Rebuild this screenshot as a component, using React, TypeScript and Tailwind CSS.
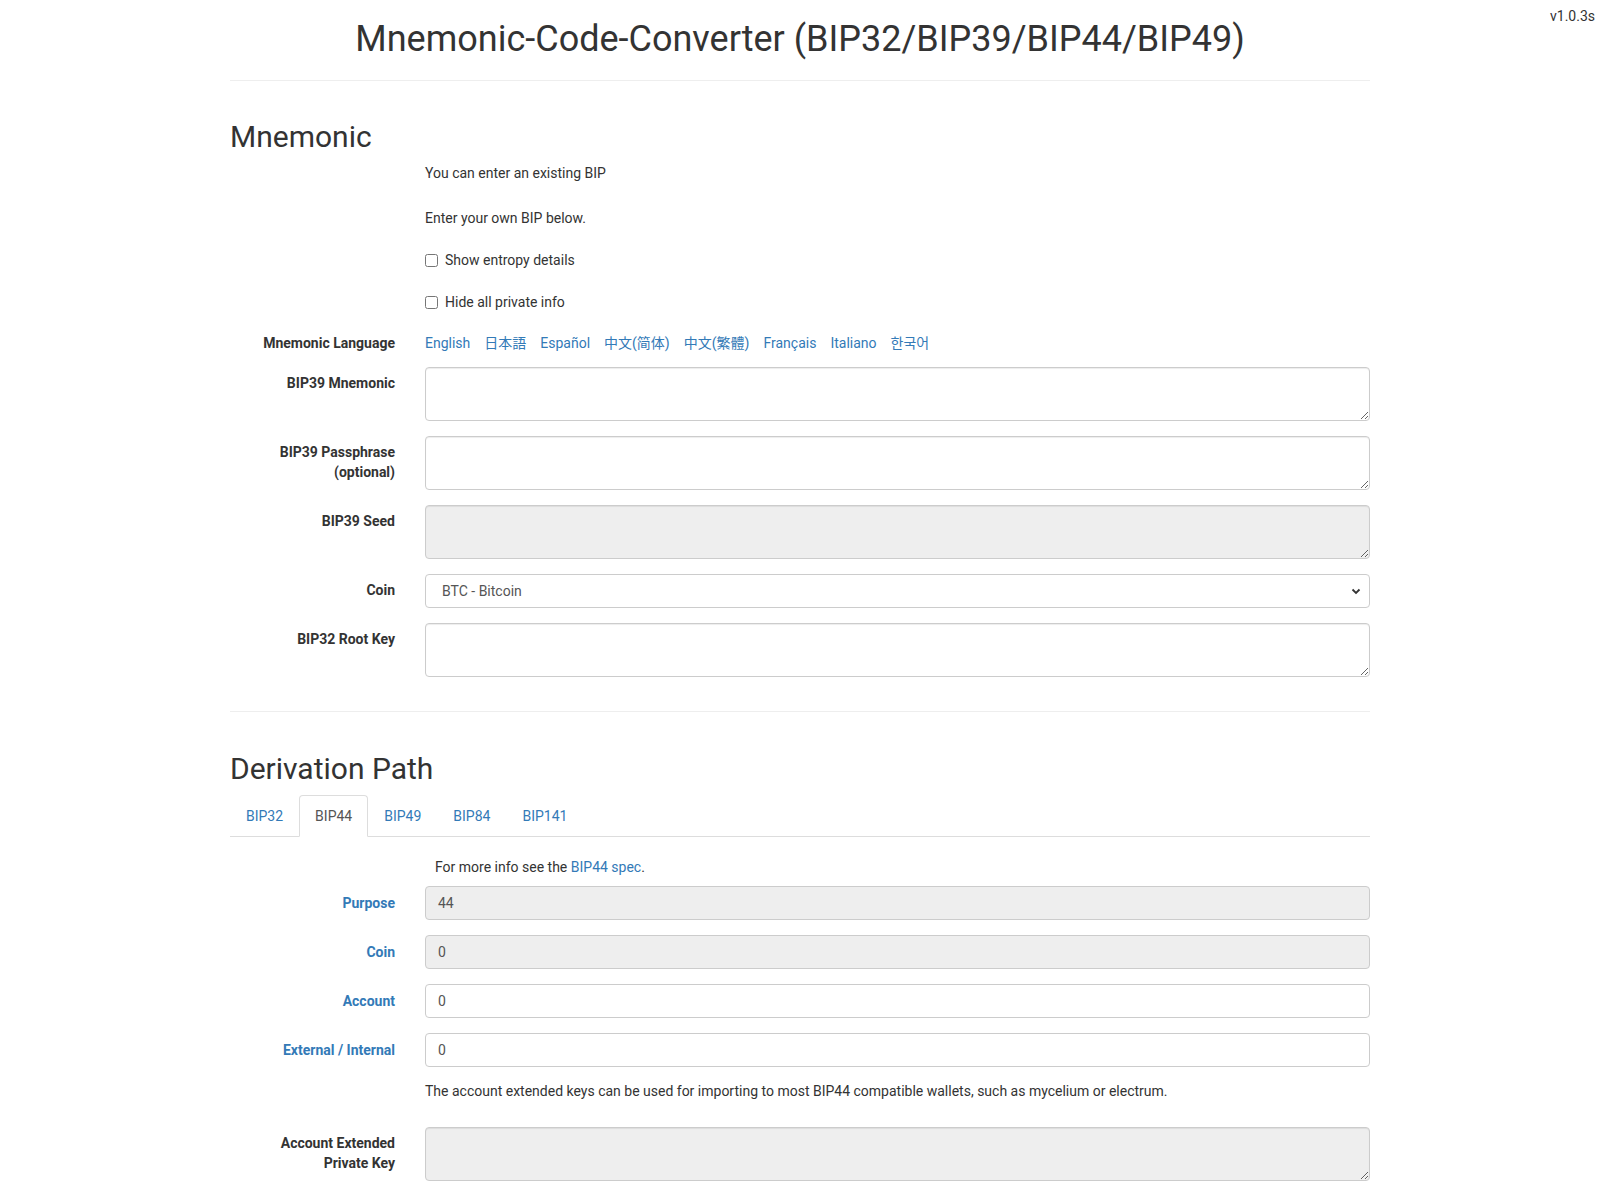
import React from "react";

const Label = ({ children, blue }: { children: React.ReactNode; blue?: boolean }) => (
  <div className={`w-[165px] shrink-0 text-right font-bold text-[14px] leading-[20px] ${blue ? "text-[#337ab7]" : "text-[#333]"}`}>{children}</div>
);

const Row = ({ label, blue, children, cls = "" }: { label?: React.ReactNode; blue?: boolean; children: React.ReactNode; cls?: string }) => (
  <div className={`flex gap-[30px] ${cls}`}>
    <Label blue={blue}>{label}</Label>
    <div className="flex-1">{children}</div>
  </div>
);

const TA = ({ gray }: { gray?: boolean }) => (
  <textarea readOnly={gray} className={`block w-full h-[54px] rounded border border-[#ccc] shadow-[inset_0_1px_1px_rgba(0,0,0,0.075)] ${gray ? "bg-[#eee]" : "bg-white"}`} />
);

const Inp = ({ v, gray }: { v: string; gray?: boolean }) => (
  <div className={`h-[34px] w-full rounded border border-[#ccc] px-3 flex items-center text-[14px] text-[#555] ${gray ? "bg-[#eee]" : "bg-white"}`}>{v}</div>
);

export default function App() {
  const langs = ["English", "日本語", "Español", "中文(简体)", "中文(繁體)", "Français", "Italiano", "한국어"];
  return (
    <div className="relative bg-white text-[#333] text-[14px] leading-[20px]" style={{ fontFamily: "Roboto, 'Noto Sans CJK JP', 'Noto Sans CJK KR', sans-serif" }}>
      <div className="absolute right-[5px] top-[6px] text-[14px]">v1.0.3s</div>
      <div className="w-[1140px] mx-auto pb-10">
        <h1 className="text-center text-[36px] leading-[40px] pt-[19px] pb-[21px] border-b border-[#eee]">Mnemonic-Code-Converter (BIP32/BIP39/BIP44/BIP49)</h1>
        <h2 className="text-[30px] leading-[33px] mt-[39px]">Mnemonic</h2>
        <Row cls="mt-[10px]"><p>You can enter an existing BIP</p></Row>
        <Row cls="mt-[25px]"><p>Enter your own BIP below.</p></Row>
        <Row cls="mt-[22px]"><label className="flex items-center gap-[7px]"><input type="checkbox" className="w-[13px] h-[13px]" />Show entropy details</label></Row>
        <Row cls="mt-[22px]"><label className="flex items-center gap-[7px]"><input type="checkbox" className="w-[13px] h-[13px]" />Hide all private info</label></Row>
        <Row label="Mnemonic Language" cls="mt-[21px]">
          <div className="flex gap-[14px] text-[#337ab7]">{langs.map(l => <span key={l}>{l}</span>)}</div>
        </Row>
        <Row label={<div className="pt-[6px]">BIP39 Mnemonic</div>} cls="mt-[14px]"><TA /></Row>
        <Row label={<div className="pt-[6px]">BIP39 Passphrase<br />(optional)</div>} cls="mt-[15px]"><TA /></Row>
        <Row label={<div className="pt-[6px]">BIP39 Seed</div>} cls="mt-[15px]"><TA gray /></Row>
        <Row label={<div className="pt-[6px]">Coin</div>} cls="mt-[15px]">
          <div className="h-[34px] w-full rounded border border-[#ccc] pl-4 pr-2 flex items-center justify-between text-[14px] text-[#555]">
            <span>BTC - Bitcoin</span>
            <svg width="10" height="10" viewBox="0 0 10 10"><path d="M1.5 3.5 L5 7 L8.5 3.5" stroke="#333" strokeWidth="1.8" fill="none" /></svg>
          </div>
        </Row>
        <Row label={<div className="pt-[6px]">BIP32 Root Key</div>} cls="mt-[15px]"><TA /></Row>
        <div className="border-t border-[#eee] mt-[34px]" />
        <h2 className="text-[30px] leading-[33px] mt-[40px]">Derivation Path</h2>
        <div className="flex border-b border-[#ddd] mt-[10px] text-[14px]">
          {["BIP32", "BIP44", "BIP49", "BIP84", "BIP141"].map(t => (
            <div key={t} className={`px-[15px] h-[42px] flex items-center -mb-px ${t === "BIP44" ? "border border-[#ddd] border-b-white rounded-t text-[#555] bg-white" : "text-[#337ab7] border border-transparent"}`}>{t}</div>
          ))}
        </div>
        <Row cls="mt-[20px]"><p className="pl-[10px]">For more info see the <span className="text-[#337ab7]">BIP44 spec</span>.</p></Row>
        <Row label={<div className="pt-[7px]">Purpose</div>} blue cls="mt-[9px]"><Inp v="44" gray /></Row>
        <Row label={<div className="pt-[7px]">Coin</div>} blue cls="mt-[15px]"><Inp v="0" gray /></Row>
        <Row label={<div className="pt-[7px]">Account</div>} blue cls="mt-[15px]"><Inp v="0" /></Row>
        <Row label={<div className="pt-[7px]">External / Internal</div>} blue cls="mt-[15px]"><Inp v="0" /></Row>
        <Row cls="mt-[14px]"><p>The account extended keys can be used for importing to most BIP44 compatible wallets, such as mycelium or electrum.</p></Row>
        <Row label={<div className="pt-[6px]">Account Extended<br />Private Key</div>} cls="mt-[26px]"><TA gray /></Row>
      </div>
    </div>
  );
}
